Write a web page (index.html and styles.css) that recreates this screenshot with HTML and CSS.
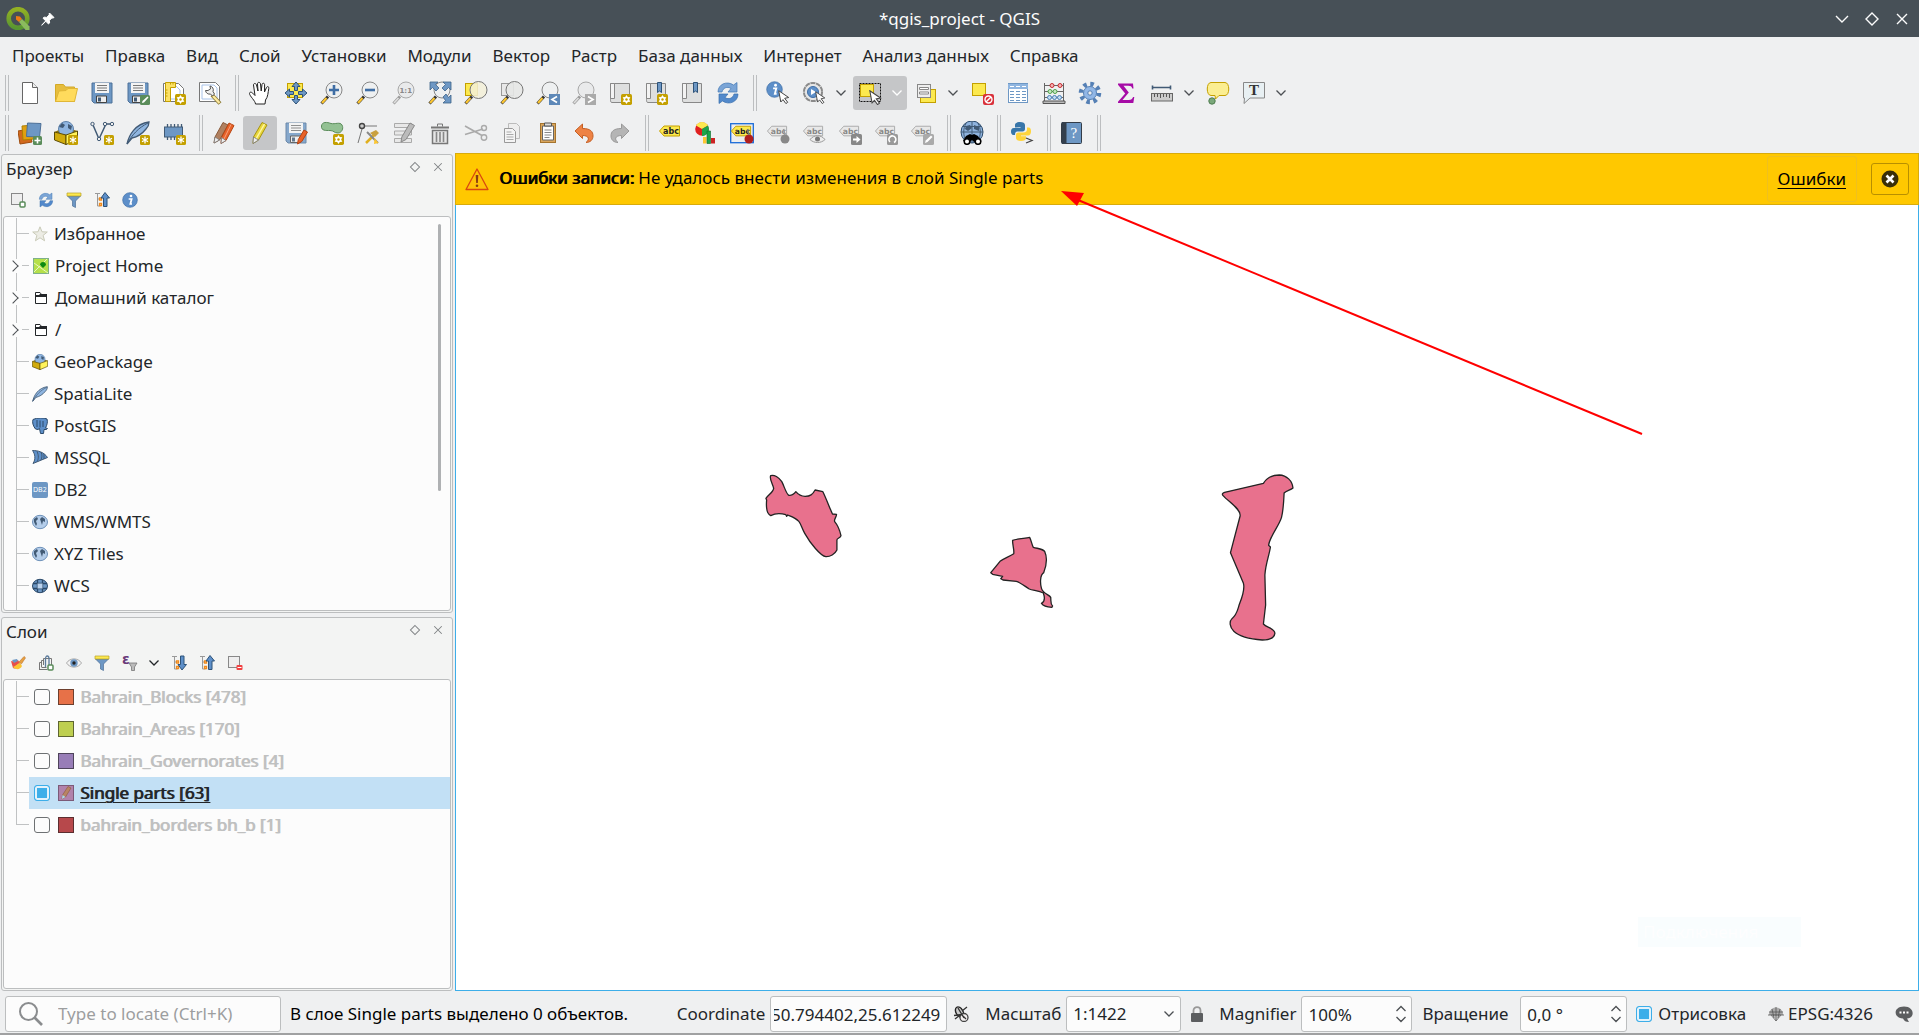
FILE: index.html
```html
<!DOCTYPE html>
<html lang="ru">
<head>
<meta charset="utf-8">
<title>*qgis_project - QGIS</title>
<link rel="stylesheet" href="styles.css">
</head>
<body>
<svg class="sprite" aria-hidden="true">
<defs>
<linearGradient id="qg" x1="0" y1="0" x2="0" y2="1"><stop offset="0" stop-color="#93b023"/><stop offset="1" stop-color="#589632"/></linearGradient>
<symbol id="qgis" viewBox="0 0 24 24"><circle cx="12" cy="11.500" r="9.300" fill="none" stroke="url(#qg)" stroke-width="4.600"/><path d="M10 9l4 .5 2 2.500-3 3-3-2.500z" fill="#ee7913"/><path d="M13 15l3-3 7.500 7.500V23h-4z" fill="#8bbb5e"/></symbol>
<symbol id="pin" viewBox="0 0 14 14"><path d="M8.500 1l4.500 4.500-1.200.6-.8-.3-2.600 2.600.2 2.600-1.100 1-2.700-2.700L.8 13.300 1 12.800l3.700-3.900L2 6.200l1.100-1 2.600.2L8.300 2.800 8 2z" fill="#fff" stroke="#fff"/></symbol>
<symbol id="down" viewBox="0 0 16 16"><path d="M2 5l6 6 6-6" fill="none" stroke="currentColor" stroke-width="1.400"/></symbol>
<symbol id="diamond" viewBox="0 0 16 16"><path d="M8 2l6 6-6 6-6-6z" fill="none" stroke="currentColor" stroke-width="1.400"/></symbol>
<symbol id="x" viewBox="0 0 16 16"><path d="M3 3l10 10M13 3L3 13" fill="none" stroke="currentColor" stroke-width="1.400"/></symbol>
<symbol id="chev" viewBox="0 0 10 10"><path d="M.5 2.500L5 7l4.500-4.500" fill="none" stroke="currentColor" stroke-width="1.300"/></symbol>

<symbol id="star-badge" viewBox="0 0 10 10"><rect width="10" height="10" rx="1.500" fill="#c4a000"/><path d="M5 1.500v7M2 3.200l6 3.600M8 3.200L2 6.800" stroke="#fff" stroke-width="1.300"/></symbol>
<symbol id="sun-badge" viewBox="0 0 10 10"><rect width="10" height="10" rx="1.500" fill="#c4a000"/><path d="M5 1l1.200 1.800 2.300.2L7.400 5l1.100 2-2.300.2L5 9 3.800 7.200 1.500 7l1.100-2-1.100-2 2.300-.2z" fill="#fff"/><circle cx="5" cy="5" r="1.100" fill="#c4a000"/></symbol>
<symbol id="lens" viewBox="0 0 24 24"><path d="M1.500 22.500l6.500-7" stroke="#333" stroke-width="3"/><path d="M2 22l4.500-5" stroke="#fcc631" stroke-width="2.200"/><circle cx="14" cy="9" r="8" fill="#eef0f1" stroke="#888"/></symbol>
<symbol id="lens-off" viewBox="0 0 24 24"><path d="M1.500 22.500l6.500-7" stroke="#999" stroke-width="3"/><path d="M2 22l4.500-5" stroke="#ddd" stroke-width="1.800"/><circle cx="14" cy="9" r="8" fill="#e9eaeb" stroke="#a9a9a9"/></symbol>
<symbol id="tag" viewBox="0 0 24 14"><path d="M6 1h15.500v10H6L1.500 6z" fill="#fce94f" stroke="#c4a000"/><text x="5" y="9" class="abc" fill="#222">abc</text></symbol>
<symbol id="tag-off" viewBox="0 0 24 14"><path d="M6 1h15.500v10H6L1.500 6z" fill="#e8e8e8" stroke="#aaa"/><text x="5" y="9" class="abc" fill="#888">abc</text></symbol>

<symbol id="new" viewBox="0 0 24 24"><path d="M4.500 1.500h10l5 5v16h-15z" fill="#fff" stroke="#666"/><path d="M14.500 1.500v5h5" fill="#eee" stroke="#666"/></symbol>
<symbol id="open" viewBox="0 0 24 24"><path d="M1.500 20.500v-17h8l2 2.500h9v14.500z" fill="#e6bd3d" stroke="#d3a927"/><path d="M1.500 20.500L5 10l7-.5 2-2h9.500l-3 13z" fill="#ffdb5c" stroke="#e0b636"/></symbol>
<symbol id="save" viewBox="0 0 24 24"><path d="M2 2h20v20H4l-2-2z" fill="#6d97c4" stroke="#4d7098"/><path d="M5 2h14v10H5z" fill="#f4f4f4"/><path d="M7 4.500h10M7 7h10M7 9.500h10" stroke="#777"/><path d="M6.500 15h10v6.500h-10z" fill="#eee" stroke="#444"/><path d="M8 16.500h3v4H8z" fill="#415a75"/></symbol>
<symbol id="saveas" viewBox="0 0 24 24"><use href="#save"/><rect x="14" y="14" width="10" height="10" rx="1.500" fill="#5a8c5a"/><path d="M16 22l.5-2 5-4.500 1 1-4.500 5z" fill="#fff"/></symbol>
<symbol id="layout" viewBox="0 0 24 24"><path d="M1.500 2.500h15l5 5v13h-20z" fill="#fff" stroke="#777"/><path d="M4 5h10l4 4v9H4z" fill="#fff" stroke="#a8c2e8"/><path d="M3.500 1.500h10v5h-5v14h-5z" fill="#fce166" stroke="#c4a000"/><path d="M3.500 9h2M3.500 12h2M3.500 15h2M8.500 1.500v2M11 1.500v2" stroke="#c4a000"/><use href="#sun-badge" x="13" y="13" width="11" height="11"/></symbol>
<symbol id="manager" viewBox="0 0 24 24"><path d="M1.500 1.500h16l4 4v15h-20z" fill="#fff" stroke="#777"/><path d="M4 4h12l3 3v11H4z" fill="none" stroke="#a8c2e8"/><path d="M14 14l8 8.500" stroke="#8b7a35" stroke-width="4"/><path d="M15 15l6.500 7" stroke="#fce9a0" stroke-width="2.400"/><path d="M7.500 9.500a4 4 0 0 0 5 3.500l2 2 2-2-1.500-2.500A4 4 0 0 0 12 5l.5 3-2.500 1.500z" fill="#eee" stroke="#555"/></symbol>
<symbol id="hand" viewBox="0 0 24 24"><path d="M7.500 23c0-3-6-8-6-10.500 0-2 2.500-1.500 3.500 0l2 2L5.500 4c0-2 2.500-2 3 0l1.500 6-.5-7c0-2.200 2.700-2.200 3 0l.7 7 .8-6.500c.4-1.800 2.600-1.600 2.600.2L16.500 11l2-4.500c.8-1.600 2.700-.8 2.300.8-.8 4.200-.8 8.700-3.300 11.700l-.5 4z" fill="#fff" stroke="#222"/></symbol>
<symbol id="pan" viewBox="0 0 24 24"><rect x="3.500" y="2.500" width="15" height="14" fill="#fce94f" stroke="#c4a000"/><path d="M12 1l4 4.500h-2.500v4h-3v-4H8zM12 23l4-4.500h-2.500v-4h-3v4H8zM1 12l4.500-4v2.500h4v3h-4V16zM23 12l-4.500-4v2.500h-4v3h4V16z" fill="#6d97c4" stroke="#2d5278"/></symbol>
<symbol id="zin" viewBox="0 0 24 24"><use href="#lens"/><path d="M14 4v10M9 9h10" stroke="#3f6ea5" stroke-width="2.600"/></symbol>
<symbol id="zout" viewBox="0 0 24 24"><use href="#lens"/><path d="M9 9h10" stroke="#3f6ea5" stroke-width="2.600"/></symbol>
<symbol id="z11" viewBox="0 0 24 24"><use href="#lens-off"/><text x="7.500" y="12" class="abc one" fill="#888">1:1</text></symbol>
<symbol id="zfull" viewBox="0 0 24 24"><use href="#lens"/><path d="M2 1h8L7.500 3.500 11 7l-3 3-3.500-3.500L2 9zM23 1v8l-2.500-2.500L17 10l-3-3 3.500-3.500L15 1zM23 22h-8l2.500-2.500L15 16l3-3 2.500 3.500L23 14z" fill="#6d97c4" stroke="#3d6289" stroke-width=".8"/></symbol>
<symbol id="zsel" viewBox="0 0 24 24"><rect x="1.500" y="2.500" width="12" height="12" fill="#fce94f" stroke="#c4a000"/><path d="M1.500 22.500l6.500-7" stroke="#333" stroke-width="3"/><path d="M2 22l4.500-5" stroke="#fcc631" stroke-width="2.200"/><circle cx="14.500" cy="9" r="8.500" fill="#f3f0d8" fill-opacity=".85" stroke="#777"/></symbol>
<symbol id="zlay" viewBox="0 0 24 24"><rect x="1.500" y="2.500" width="12" height="12" fill="#e8e8e8" stroke="#999"/><path d="M1.500 22.500l6.500-7" stroke="#333" stroke-width="3"/><path d="M2 22l4.500-5" stroke="#fcc631" stroke-width="2.200"/><circle cx="14.500" cy="9" r="8.500" fill="#e6e7e6" fill-opacity=".9" stroke="#777"/></symbol>
<symbol id="zprev" viewBox="0 0 24 24"><use href="#lens"/><rect x="13" y="13" width="11" height="11" fill="#5d88b8"/><path d="M21 15.500l-5 3 5 3" fill="none" stroke="#fff" stroke-width="1.700"/></symbol>
<symbol id="znext" viewBox="0 0 24 24"><use href="#lens-off"/><rect x="13" y="13" width="11" height="11" fill="#aaa"/><path d="M16 15.500l5 3-5 3" fill="none" stroke="#fff" stroke-width="1.700"/></symbol>
<symbol id="book" viewBox="0 0 24 24"><path d="M2.500 2.500h19v19H4c-1.500 0-1.500-1.500-1.500-3z" fill="#dedfdf" stroke="#888"/><path d="M2.500 2.500h4v15h-4z" fill="#f3f3f3" stroke="#888"/></symbol>
<symbol id="newview" viewBox="0 0 24 24"><use href="#book"/><use href="#sun-badge" x="13" y="13" width="11" height="11"/></symbol>
<symbol id="newmark" viewBox="0 0 24 24"><use href="#book"/><path d="M13.500 1.500h4v10l-2-1.500-2 1.500z" fill="#6d97c4" stroke="#2d5278"/><use href="#sun-badge" x="13" y="13" width="11" height="11"/></symbol>
<symbol id="marks" viewBox="0 0 24 24"><use href="#book"/><path d="M13.500 1.500h4v10l-2-1.500-2 1.500z" fill="#6d97c4" stroke="#2d5278"/></symbol>
<symbol id="refresh" viewBox="0 0 24 24"><path d="M2 11C2 3 11-.5 17.500 4L21 1.500V11h-9l3-3.500C11 5 7 7 6 11z" fill="#7ba5d6" stroke="#4378b4" stroke-width=".7"/><path d="M22 13c0 8-9 11.500-15.500 7L3 22.500V13h9l-3 3.500c4 2.500 8 .5 9-3.500z" fill="#5289cb" stroke="#3b70ad" stroke-width=".7"/></symbol>
<symbol id="cursor" viewBox="0 0 12 14"><path d="M.7.700l10 6.800-4 .8 3 4-1.800 1.300-2.900-4L2.800 12z" fill="#fff" stroke="#444"/></symbol>
<symbol id="info" viewBox="0 0 24 24"><circle cx="12" cy="12" r="11" fill="#5d8fc9" stroke="#3e6ea6"/><circle cx="13.500" cy="6" r="2" fill="#fff"/><path d="M10 10.500h4.500L12.500 18H15" fill="none" stroke="#fff" stroke-width="2.600"/></symbol>
<symbol id="ident" viewBox="0 0 24 24"><use href="#info" x="0" y="0" width="17" height="17"/><use href="#cursor" x="12" y="9" width="12" height="14"/></symbol>
<symbol id="action" viewBox="0 0 24 24"><circle cx="11" cy="11" r="9" fill="#e6e6e6" stroke="#8a8a8a" stroke-width="2.200" stroke-dasharray="5 .65"/><circle cx="11" cy="11" r="8" fill="#e6e6e6"/><circle cx="11" cy="11" r="5.500" fill="#5d8fc9" stroke="#3e6ea6"/><path d="M9 8l5 3-5 3z" fill="#fff"/><use href="#cursor" x="13" y="10" width="11" height="13"/></symbol>
<symbol id="select" viewBox="0 0 24 24"><rect x="2.500" y="3.500" width="13" height="12" fill="#fce94f" stroke="#c4a000"/><rect x="1.500" y="2.500" width="21" height="18" fill="none" stroke="#111" stroke-dasharray="2 1"/><use href="#cursor" x="11" y="9" width="13" height="15"/></symbol>
<symbol id="selform" viewBox="0 0 24 24"><rect x="6.500" y="8.500" width="15" height="13" fill="#fce94f" stroke="#c4a000"/><rect x="3.500" y="3.500" width="13" height="13" fill="#eee" stroke="#888"/><path d="M5.500 6.500h9v2h-9zM5.500 11h9v2h-9z" fill="#fff" stroke="#888"/></symbol>
<symbol id="desel" viewBox="0 0 24 24"><rect x="2.500" y="2.500" width="13" height="12" fill="#fce94f" stroke="#c4a000"/><rect x="13" y="13" width="11" height="11" rx="2" fill="#d9303a"/><circle cx="18.500" cy="18.500" r="3.500" fill="none" stroke="#fff" stroke-width="1.400"/><path d="M16 21l5-5" stroke="#fff" stroke-width="1.400"/></symbol>
<symbol id="table" viewBox="0 0 24 24"><rect x="2.500" y="2.500" width="19" height="19" fill="#fff" stroke="#6d97c4"/><path d="M2 3h20v5H2z" fill="#8fb5e0"/><path d="M4 5.500h4M10 5.500h4M16 5.500h4" stroke="#fff"/><path d="M4 10.500h4M4 13.500h4M4 16.500h4M4 19.500h4M10 10.500h4M10 13.500h4M10 16.500h4M10 19.500h4M16 10.500h4M16 13.500h4M16 16.500h4M16 19.500h4" stroke="#6d97c4"/></symbol>
<symbol id="abacus" viewBox="0 0 24 24"><path d="M2.500 2v19M21.500 2v19M2 4.500h20M2 10.500h20M2 16.500h20" stroke="#666" fill="none"/><path d="M1 20h22v2.500H1z" fill="#bbb" stroke="#555"/><g fill="#f4b6b6" stroke="#c8282d"><circle cx="10" cy="4.500" r="2"/><circle cx="18" cy="4.500" r="2"/></g><g fill="#c6e6c3" stroke="#4fa34a"><circle cx="8" cy="10.500" r="2"/><circle cx="13" cy="10.500" r="2"/></g><g fill="#c3dcf4" stroke="#4a80b5"><circle cx="7.500" cy="16.500" r="2"/><circle cx="12.500" cy="16.500" r="2"/><circle cx="17.500" cy="16.500" r="2"/></g></symbol>
<symbol id="gear" viewBox="0 0 24 24"><circle cx="12" cy="12" r="9" fill="none" stroke="#5580b5" stroke-width="4.500" stroke-dasharray="3.500 3.570"/><circle cx="12" cy="12" r="6.500" fill="#92b7e6" stroke="#5580b5"/><circle cx="12" cy="12" r="2.200" fill="#eee" stroke="#5580b5"/></symbol>
<symbol id="sigma" viewBox="0 0 24 24"><path d="M4 2.500h15l.5 5h-1.200c-.6-2-1.500-2.700-4-2.700H9.500l5.300 6.800L8.500 19h6.300c2.500 0 3.500-1 4.300-3h1.200l-1 6H4v-1.200l7.200-8.300L4 3.700z" fill="#a60ba6"/></symbol>
<symbol id="ruler" viewBox="0 0 24 24"><path d="M2 6.500h19M2.500 4.500v4M20.500 4.500v4" stroke="#415a75" stroke-width="1.600"/><rect x="1.500" y="12.500" width="21" height="7.500" fill="#ccc" stroke="#666"/><path d="M4.500 13v3M7.500 13v3M10.500 13v4M13.500 13v3M16.500 13v3M19.500 13v4" stroke="#555"/></symbol>
<symbol id="tip" viewBox="0 0 24 24"><circle cx="6" cy="20" r="3.200" fill="#7aa87a" stroke="#4f7d4f"/><path d="M5 1.500h14c5 0 5 13 0 13h-6L9.500 18l-.5-3.500H5c-5 0-5-13 0-13z" fill="#fbee92" stroke="#c4a000"/></symbol>
<symbol id="textann" viewBox="0 0 24 24"><path d="M1.500 1.500h21V17H8l-6 5.500.5-5.500h-1z" fill="#e8f0f3" stroke="#888"/><text x="7" y="14" class="tt" fill="#333">T</text></symbol>

<symbol id="dsm" viewBox="0 0 24 24"><path d="M0 10l11-2 3 13-12 2z" fill="#d2691e" stroke="#a04d10"/><path d="M4 5l12-1v14l-11 1z" fill="#e0a010" stroke="#b08000"/><path d="M9.500 2l13.500.5-1.500 13.500-13-.5z" fill="#6d97c4" stroke="#4d7098"/><rect x="15" y="15" width="9" height="9" rx="1.500" fill="#5a8c5a"/><path d="M19.500 16.500v6M16.500 19.500h6" stroke="#fff" stroke-width="1.600"/></symbol>
<symbol id="gpkg" viewBox="0 0 24 24"><path d="M.5 11L7 8h10l6.500 2L12 14z" fill="#8a7206"/><circle cx="12" cy="8" r="7.500" fill="#8fb5e0" stroke="#5d80a8"/><path d="M8 2l3 2-2 3-4-1zM14 3l4 2-1 4-3-2z" fill="#415a75"/><path d="M.5 11L12 14v9.500L.5 19z" fill="#d1ab0c" stroke="#5c4c05"/><path d="M12 14l11.500-4v8.500L12 23.500z" fill="#fff35a" stroke="#5c4c05"/></symbol>
<symbol id="newgpkg" viewBox="0 0 24 24"><use href="#gpkg"/><use href="#star-badge" x="14" y="14" width="10" height="10"/></symbol>
<symbol id="newshp" viewBox="0 0 24 24"><path d="M3 4l6 14 7-15h6" fill="none" stroke="#415a75" stroke-width="1.500"/><g fill="#eee" stroke="#415a75"><circle cx="2.500" cy="3" r="1.700"/><circle cx="9" cy="18" r="1.700"/><circle cx="15" cy="3" r="1.700"/><circle cx="22" cy="3" r="1.700"/></g><use href="#star-badge" x="14" y="14" width="10" height="10"/></symbol>
<symbol id="feather" viewBox="0 0 24 24"><path d="M1 23C3 14 9 3 23 1c0 3-1 5-3 7-4 5-9 8-14 9z" fill="#8fb5e0" stroke="#415a75" stroke-width="1.300"/><path d="M1 23C6 14 12 7 22 2" fill="none" stroke="#415a75"/></symbol>
<symbol id="newlite" viewBox="0 0 24 24"><use href="#feather"/><use href="#star-badge" x="14" y="14" width="10" height="10"/></symbol>
<symbol id="chip" viewBox="0 0 24 24"><path d="M5.500 3v16M9 3v16M12.500 3v16M16 3v16M19.500 3v16" stroke="#415a75" stroke-width="1.300"/><rect x="2.500" y="6" width="18" height="10" fill="#6d97c4" stroke="#415a75"/><use href="#star-badge" x="14" y="14" width="10" height="10"/></symbol>
<symbol id="pencils" viewBox="0 0 24 24"><path d="M2 22l1-6L11 1.500l5 2.500-8.500 15z" fill="#b08060" stroke="#8a5a3a"/><path d="M9 22.500l.5-6L17 2l5 2.500-8 15z" fill="#e8622a" stroke="#b64410"/><path d="M12 18L19 3.500" stroke="#f7a07a"/><path d="M9 22.500l.5-6 4.500 3zM2 22l1-6 4.500 3z" fill="#eee" stroke="#777" stroke-width=".8"/></symbol>
<symbol id="pencil" viewBox="0 0 24 24"><path d="M5 22.500l.5-6.500L14 1.500l5 2.500-8.500 15z" fill="#e8d63c" stroke="#a89410"/><path d="M8 18L16.500 3" stroke="#fff7a0" stroke-width="1.500"/><path d="M5 22.500l.5-6.500 5 3z" fill="#eee" stroke="#777" stroke-width=".8"/></symbol>
<symbol id="saveedit" viewBox="0 0 24 24"><g opacity=".8"><use href="#save"/></g><path d="M13.500 23l.8-4.500L20 9l3.500 2-5.700 9.500z" fill="#e8622a" stroke="#b64410"/></symbol>
<symbol id="addpoly" viewBox="0 0 24 24"><path d="M1.500 5C2 .5 7 1 11 2.500c4 1 9-2 11 1.500s-.5 8-4 8c-4 0-4-2.500-8-2.500s-9 .5-8.500-4.500z" fill="#93c193" stroke="#5a8c5a"/><use href="#sun-badge" x="13" y="13" width="11" height="11"/></symbol>
<symbol id="vertex" viewBox="0 0 24 24"><path d="M6 8L2 22M8 5h13" stroke="#777"/><circle cx="6" cy="5" r="2.500" fill="#ccc" stroke="#444" stroke-width="1.400"/><path d="M10 22L20 12" stroke="#e0b020" stroke-width="2.500"/><path d="M11 11l11 11" stroke="#888" stroke-width="2"/><path d="M18 23l4.500-1-4-5z" fill="#fcc631"/><path d="M14 12l6-3 3 3-4 4z" fill="#c9a040"/></symbol>
<symbol id="multi" viewBox="0 0 24 24"><path d="M2.500 2.500h17v4h-17zM2.500 10h17v4h-17zM2.500 17.500h17v4h-17z" fill="#e8e8e8" stroke="#aaa"/><path d="M9 21l.8-5L18 2l4.500 2.500-8.500 14z" fill="#bbb" stroke="#888"/></symbol>
<symbol id="trash" viewBox="0 0 24 24"><path d="M4.500 9.500h15v13h-15z" fill="#e6e6e6" stroke="#777" stroke-width="1.500"/><path d="M8.500 11v10M12 11v10M15.500 11v10" stroke="#888" stroke-width="1.600"/><path d="M3 6.500h18" stroke="#777" stroke-width="2"/><path d="M9.500 5.500V3h5v2.500" fill="none" stroke="#777"/></symbol>
<symbol id="cut" viewBox="0 0 24 24"><path d="M1 5l17 9.500M1 13.500l18-5.500" stroke="#aaa" stroke-width="1.600"/><circle cx="20" cy="7" r="2.500" fill="none" stroke="#aaa" stroke-width="1.400"/><circle cx="20" cy="16.500" r="2.700" fill="none" stroke="#aaa" stroke-width="1.400"/></symbol>
<symbol id="copy" viewBox="0 0 24 24"><path d="M8.500 2.500h8l3 3v12h-11z" fill="#eee" stroke="#bbb"/><path d="M4.500 7.500h8l3 3v11h-11z" fill="#f4f4f4" stroke="#999"/><path d="M6.500 11h5M6.500 13.500h7M6.500 16h7M6.500 18.500h7" stroke="#aaa"/></symbol>
<symbol id="paste" viewBox="0 0 24 24"><rect x="4.500" y="2.500" width="15" height="19" fill="#d9a55c" stroke="#a5742e"/><path d="M6.500 5h11v14h-11z" fill="#fff" stroke="#666"/><path d="M8.500 2h7v3h-7z" fill="#ddd" stroke="#555"/><path d="M8.500 9h7M8.500 11.500h7M8.500 14h7M8.500 16.500h5" stroke="#888"/></symbol>
<symbol id="undo" viewBox="0 0 24 24"><path d="M3 10l7.500-7v4.500c8 0 10.500 3 10.500 7.500 0 4-3 6.500-7 6.500 4-3 3-7-3.500-7v3z" fill="#ee8244" stroke="#c45f24"/></symbol>
<symbol id="redo" viewBox="0 0 24 24"><path d="M21 10l-7.500-7v4.500C5.500 7.500 3 10.500 3 15c0 4 3 6.500 7 6.500-4-3-3-7 3.500-7v3z" fill="#b5b5b5" stroke="#999"/></symbol>
<symbol id="label" viewBox="0 0 24 24"><use href="#tag" x="0" y="4" width="24" height="14"/></symbol>
<symbol id="diagram" viewBox="0 0 24 24"><circle cx="8" cy="8" r="6.800" fill="#e02020"/><path d="M8 8L2 4.500A7 7 0 0 1 14 4.500z" fill="#fce94f"/><path d="M8 8l6-3.500A7 7 0 0 1 8 15z" fill="#1ca54a"/><path d="M9 16h3.500v6.500H9z" fill="#fcc631"/><path d="M13 10h3.500v12.500H13z" fill="#1ca54a" stroke="#0c6a2a" stroke-width=".6"/><path d="M17 17h4v5.500h-4z" fill="#c22"/></symbol>
<symbol id="labpin" viewBox="0 0 24 24"><rect x=".7" y="2.700" width="22.600" height="19" fill="#eee" stroke="#1a6bd8" stroke-width="1.300"/><use href="#tag" x="0" y="4" width="23" height="14"/><circle cx="19" cy="18" r="4.500" fill="#b01e1e"/><path d="M17.500 8l1.500 6" stroke="#777" stroke-width="1.500"/></symbol>
<symbol id="l1" viewBox="0 0 24 24"><use href="#tag-off" x="0" y="4" width="23" height="14"/><circle cx="19" cy="18" r="4.500" fill="#888"/><path d="M17.500 8l1.500 6" stroke="#999" stroke-width="1.500"/></symbol>
<symbol id="l2" viewBox="0 0 24 24"><use href="#tag-off" x="0" y="4" width="23" height="14"/><path d="M8 18.500c4-5 11-5 15 0-4 4-11 4-15 0z" fill="#eee" stroke="#999"/><circle cx="15.500" cy="18" r="2.500" fill="#777"/></symbol>
<symbol id="l3" viewBox="0 0 24 24"><use href="#tag-off" x="0" y="4" width="23" height="14"/><rect x="13" y="13" width="11" height="11" rx="1.500" fill="#888"/><path d="M15 17.500h3.500V15l4 3.500-4 3.500v-2.500H15z" fill="#fff"/></symbol>
<symbol id="l4" viewBox="0 0 24 24"><use href="#tag-off" x="0" y="4" width="23" height="14"/><rect x="13" y="13" width="11" height="11" rx="1.500" fill="#999"/><path d="M16 21a3.500 3.500 0 1 1 4 .5" fill="none" stroke="#fff" stroke-width="1.600"/></symbol>
<symbol id="l5" viewBox="0 0 24 24"><use href="#tag-off" x="0" y="4" width="23" height="14"/><rect x="13" y="13" width="11" height="11" rx="1.500" fill="#aaa"/><path d="M15 22l.7-2.500 5.300-5 1.500 1.500-5 5z" fill="#fff"/></symbol>
<symbol id="csw" viewBox="0 0 24 24"><circle cx="12" cy="11" r="11" fill="#8fb3de" stroke="#2c4a6a"/><path d="M1 11h22M12 0v22M3 5.500h18M6 2c-3 6-3 12 0 18M18 2c3 6 3 12 0 18" fill="none" stroke="#415a75"/><path d="M6 5l4-1 2 3-4 3-3-2zM14 4l5 2v4l-5-2z" fill="#415a75"/><path d="M6 15l4-2 2 1 2-1 4 2 3 5-7 1-2-2-2 2-7-1z" fill="#000"/><circle cx="7" cy="20.500" r="2.800" fill="#fff" stroke="#000" stroke-width="1.600"/><circle cx="18" cy="20.500" r="2.800" fill="#fff" stroke="#000" stroke-width="1.600"/></symbol>
<symbol id="python" viewBox="0 0 24 24"><path d="M5 6.500V4c0-2 2-3 5-3s5 1 5 3v4c0 1.500-1 2.500-2.500 2.500h-5C5.500 10.500 5 12 5 14H3.500C1.500 14 1 12 1 10.500s.5-3.500 3-3.500h6.500v-.7z" fill="#3876aa"/><path d="M17 6.500h1.500c2 0 2.500 2 2.500 4s-1 4-3 4H11v.7h5V17c0 2-2 3-5 3s-5-1-5-3v-3c0-1.500 1-2.500 2.500-2.500h5c2 0 3.500-1 3.500-3z" fill="#ffd43b"/><path d="M16 17l6 2.500-6 2.500" fill="none" stroke="#444" stroke-width="1.300"/></symbol>
<symbol id="help" viewBox="0 0 24 24"><rect x="1.500" y="1.500" width="20" height="21" rx="1" fill="#6d97c4" stroke="#333c47"/><path d="M2 1h4.500v22H2z" fill="#333f4d"/><text x="10.500" y="17" class="qq" fill="#fff">?</text></symbol>

<symbol id="additem" viewBox="0 0 16 16"><rect x="1.500" y="1.500" width="11" height="11" fill="#eee" stroke="#888"/><rect x="10" y="10" width="5" height="5" rx="1" fill="#fff" stroke="#5a8c5a" stroke-width="1.500"/></symbol>
<symbol id="filter" viewBox="0 0 16 16"><path d="M1.500 4h13L9.500 9v6.500l-3-1.500V9z" fill="#6d97c4" stroke="#4d7098" stroke-width=".7"/><path d="M1 1h14v3H1z" fill="#fce94f" stroke="#b9a22a" stroke-width=".7"/></symbol>
<symbol id="collapse" viewBox="0 0 16 16"><path d="M1 1.500h5M3.500 2v12h3M3.500 7h2" fill="none" stroke="#999"/><path d="M5.500 6h2v2h-2zM5.500 11.500h2v2h-2z" fill="#fff" stroke="#f08a1c" stroke-width="1.300"/><path d="M11 .5L15.500 6H13v8.500H9.500V6H7z" fill="#5d8fc9" stroke="#2d5278"/></symbol>
<symbol id="expand" viewBox="0 0 16 16"><path d="M1 1.500h5M3.500 2v12h3M3.500 7h2" fill="none" stroke="#999"/><path d="M5.500 6h2v2h-2zM5.500 11.500h2v2h-2z" fill="#fff" stroke="#f08a1c" stroke-width="1.300"/><path d="M11 15L15.500 9.500H13V1H9.500v8.500H7z" fill="#5d8fc9" stroke="#2d5278"/></symbol>
<symbol id="brush" viewBox="0 0 16 16"><path d="M1 6c3 1 5-1 7-1l3 5c-2 4-6 4-8 3z" fill="#e85048"/><path d="M3 12c3-1 5-4 7-4l2 3c-2 4-6 4-9 1z" fill="#fcc631"/><path d="M2 5l5-1 1 2-4 2z" fill="#6d97c4"/><path d="M9 7l5-5.500 1.500 1.300-4 6z" fill="#e8a040" stroke="#b9722a" stroke-width=".6"/></symbol>
<symbol id="addgroup" viewBox="0 0 16 16"><path d="M5.500 10V3.500h8V10M3.500 12V5.500M3.500 5.500h2M1.500 15V7.500h2M1.500 14.500h8M3.500 12.500h5" fill="none" stroke="#777"/><path d="M7.500 12V4c0-4 3.500-4 3.500 0v6" fill="none" stroke="#5d7c9c" stroke-width="1.300"/><rect x="10" y="10" width="5" height="5" rx="1" fill="#fff" stroke="#5a8c5a" stroke-width="1.500"/></symbol>
<symbol id="eye" viewBox="0 0 16 16"><path d="M.5 8C4 2.500 12 2.500 15.500 8 12 13.500 4 13.500.5 8z" fill="#f2f2f2" stroke="#aaa"/><circle cx="8" cy="8" r="3.700" fill="#6d97c4"/><circle cx="8" cy="8" r="1.700" fill="#222"/></symbol>
<symbol id="eps" viewBox="0 0 16 16"><text x="0" y="9" class="ee" fill="#6a3a7a">ε</text><path d="M7 8h8l-2.500 4v3.500H9.500V12z" fill="#bbb" stroke="#777" stroke-width=".8"/></symbol>
<symbol id="remove" viewBox="0 0 16 16"><rect x="1.500" y="1.500" width="11" height="11" fill="#eee" stroke="#888"/><rect x="9.500" y="10" width="6" height="5" rx="1" fill="#f04040"/><path d="M10.500 12.500h4" stroke="#fff"/></symbol>

<symbol id="fav" viewBox="0 0 16 16"><path d="M8 .8l2 5 5.300.2-4.200 3.400 1.500 5.400L8 11.800l-4.600 3 1.500-5.400L.7 6 6 5.800z" fill="#ecece4" stroke="#c9cab8"/></symbol>
<symbol id="home" viewBox="0 0 16 16"><rect x=".5" y=".5" width="15" height="15" fill="#b5e04a" stroke="#7fb08a"/><path d="M1 5l14 10M1 14L14 1" stroke="#e7f7c0"/><path d="M10 10L7 7c0-4 6-4 6 0z" fill="#0c8a10"/></symbol>
<symbol id="folder" viewBox="0 0 16 16"><path d="M2.500 13.500v-11H7l1.500 2h5v9z" fill="#fff" stroke="#232629"/><path d="M7 4h7v3H3V5h3z" fill="#232629"/></symbol>
<symbol id="pg" viewBox="0 0 16 16"><path d="M1 1.500C5-.5 12-.5 15 1c1 3 0 6-1.500 9l2 .5-1 1h-2.500l-.5 4H8.500l-1-5-1.500 1-2.500-.5C1 8 0 4 1 1.500z" fill="#5d8fc9" stroke="#2c4a6a"/><path d="M5 2v7M8 2.500v7M11 3v6" stroke="#2c4a6a"/></symbol>
<symbol id="ms" viewBox="0 0 16 16"><path d="M.5.500C6 .5 12 2 15.500 7.500L1 13.500C4 9 3 4 .5.500z" fill="#5d8fc9" stroke="#415a75"/><path d="M5 1.500c2 4 1.500 8 0 10M9 2c1.500 3 1 5.500 0 8M12 4v5" fill="none" stroke="#415a75"/></symbol>
<symbol id="db2" viewBox="0 0 16 16"><rect width="16" height="16" rx="2" fill="#6d97c4"/><text x="1" y="10" class="db" fill="#fff">DB2</text></symbol>
<symbol id="globe" viewBox="0 0 16 16"><ellipse cx="8" cy="8" rx="7.500" ry="6.700" fill="#b4cdea" stroke="#6d90b8"/><path d="M2 5l3-2 1 2-2 2 1 3-1 2-2-4zM8 5l2-2 3 2v3l-2-1-1 4-1-3z" fill="#415a75"/></symbol>
<symbol id="wcs" viewBox="0 0 16 16"><ellipse cx="8" cy="8" rx="7.500" ry="6.700" fill="#6d97c4" stroke="#2c4a6a"/><path d="M1 5.500h14M1 10.500h14M5.500 2v12M10.500 2v12" stroke="#2c4a6a" stroke-width="1.300"/><path d="M5.500 5.500h5v5h-5z" fill="#bcd3ee"/></symbol>
<symbol id="editsw" viewBox="0 0 16 16"><rect x=".5" y=".5" width="15" height="15" fill="#b182ab" stroke="#7c5a78"/><path d="M4 14l.5-4L10 1.500l3 1.500-5.500 9z" fill="#b98464" stroke="#8a5a3a" stroke-width=".6"/><path d="M4 14l.5-4 3 2z" fill="#a7d8f0"/></symbol>

<symbol id="warn" viewBox="0 0 24 24"><path d="M12 2L23 22.500H1z" fill="#ffc107" stroke="#d9480f" stroke-width="1.300" stroke-linejoin="round"/><path d="M10.700 8h2.600l-.5 8h-1.600z" fill="#8a3b12"/><circle cx="12" cy="18.800" r="1.300" fill="#8a3b12"/></symbol>
<symbol id="close" viewBox="0 0 18 18"><circle cx="9" cy="9" r="8.500" fill="#3a2f08"/><path d="M5.500 5.500l7 7M12.500 5.500l-7 7" stroke="#fff" stroke-width="2.600"/></symbol>
<symbol id="search" viewBox="0 0 24 24"><circle cx="9.500" cy="9.500" r="8.500" fill="none" stroke="#8a8c8e" stroke-width="2"/><path d="M15.500 15.500l7.500 7.500" stroke="#8a8c8e" stroke-width="2.600"/></symbol>
<symbol id="mouse" viewBox="0 0 16 16"><ellipse cx="6.500" cy="6" rx="3.500" ry="5.500" transform="rotate(-30 6.500 6)" fill="#ccc" stroke="#222" stroke-width="1.400"/><circle cx="11" cy="11.500" r="4" fill="#f4f0f0" stroke="#444" stroke-width="1.300"/><path d="M1 9.500l8-1M2 13l5-4M9 5l5-4M5 2l6 10M10 10l3 3" stroke="#333" stroke-width="1.300"/></symbol>
<symbol id="lock" viewBox="0 0 14 16"><path d="M3.500 8V4.500c0-4.500 7-4.500 7 0V8" fill="none" stroke="#999" stroke-width="1.800"/><rect x="1" y="7" width="12" height="9" rx="1" fill="#5c5e60"/></symbol>
<symbol id="crs" viewBox="0 0 16 16"><path d="M1 9C1-1 15-1 15 9z" fill="#aaa"/><path d="M3 9l5 6 5-6z" fill="#ccc" stroke="#888"/><path d="M1 6h14M8 1v14M4 3l2 9M12 3l-2 9M0 9h16" stroke="#555" fill="none" stroke-width=".8"/></symbol>
<symbol id="bubble" viewBox="0 0 18 16"><path d="M9 .5c11 0 11 12 3 12l2 3.500c-3 0-5-1-6-3.500C-2 12-2 .5 9 .5z" fill="#5c5e60"/><path d="M4.500 6.500h2M8 6.500h2M11.500 6.500h2" stroke="#fff" stroke-width="2"/></symbol>
</defs>
</svg>

<header class="titlebar">
  <div class="tb-side"><svg class="i24"><use href="#qgis"/></svg><svg class="i14"><use href="#pin"/></svg></div>
  <h1>*qgis_project - QGIS</h1>
  <div class="tb-side end"><button aria-label="Свернуть"><svg class="i16"><use href="#down"/></svg></button><button aria-label="Развернуть"><svg class="i16"><use href="#diamond"/></svg></button><button aria-label="Закрыть"><svg class="i16"><use href="#x"/></svg></button></div>
</header>

<nav class="menubar">
  <button>Проекты</button><button>Правка</button><button>Вид</button><button>Слой</button><button>Установки</button><button>Модули</button><button>Вектор</button><button>Растр</button><button>База данных</button><button>Интернет</button><button>Анализ данных</button><button>Справка</button>
</nav>

<div class="toolbar">
  <i class="handle"></i>
  <button class="tool"><svg><use href="#new"/></svg></button>
  <button class="tool"><svg><use href="#open"/></svg></button>
  <button class="tool"><svg><use href="#save"/></svg></button>
  <button class="tool"><svg><use href="#saveas"/></svg></button>
  <button class="tool"><svg><use href="#layout"/></svg></button>
  <button class="tool"><svg><use href="#manager"/></svg></button>
  <i class="handle"></i>
  <button class="tool"><svg><use href="#hand"/></svg></button>
  <button class="tool"><svg><use href="#pan"/></svg></button>
  <button class="tool"><svg><use href="#zin"/></svg></button>
  <button class="tool"><svg><use href="#zout"/></svg></button>
  <button class="tool"><svg><use href="#z11"/></svg></button>
  <button class="tool"><svg><use href="#zfull"/></svg></button>
  <button class="tool"><svg><use href="#zsel"/></svg></button>
  <button class="tool"><svg><use href="#zlay"/></svg></button>
  <button class="tool"><svg><use href="#zprev"/></svg></button>
  <button class="tool"><svg><use href="#znext"/></svg></button>
  <button class="tool"><svg><use href="#newview"/></svg></button>
  <button class="tool"><svg><use href="#newmark"/></svg></button>
  <button class="tool"><svg><use href="#marks"/></svg></button>
  <button class="tool"><svg><use href="#refresh"/></svg></button>
  <i class="handle"></i>
  <button class="tool"><svg><use href="#ident"/></svg></button>
  <button class="tool menu"><svg><use href="#action"/></svg><svg class="arrow"><use href="#chev"/></svg></button>
  <button class="tool menu active"><svg><use href="#select"/></svg><svg class="arrow"><use href="#chev"/></svg></button>
  <button class="tool menu"><svg><use href="#selform"/></svg><svg class="arrow"><use href="#chev"/></svg></button>
  <button class="tool"><svg><use href="#desel"/></svg></button>
  <button class="tool"><svg><use href="#table"/></svg></button>
  <button class="tool"><svg><use href="#abacus"/></svg></button>
  <button class="tool"><svg><use href="#gear"/></svg></button>
  <button class="tool"><svg><use href="#sigma"/></svg></button>
  <button class="tool menu"><svg><use href="#ruler"/></svg><svg class="arrow"><use href="#chev"/></svg></button>
  <button class="tool"><svg><use href="#tip"/></svg></button>
  <button class="tool menu"><svg><use href="#textann"/></svg><svg class="arrow"><use href="#chev"/></svg></button>
</div>
<div class="toolbar">
  <i class="handle"></i>
  <button class="tool"><svg><use href="#dsm"/></svg></button>
  <button class="tool"><svg><use href="#newgpkg"/></svg></button>
  <button class="tool"><svg><use href="#newshp"/></svg></button>
  <button class="tool"><svg><use href="#newlite"/></svg></button>
  <button class="tool"><svg><use href="#chip"/></svg></button>
  <i class="handle"></i>
  <button class="tool"><svg><use href="#pencils"/></svg></button>
  <button class="tool active"><svg><use href="#pencil"/></svg></button>
  <button class="tool"><svg><use href="#saveedit"/></svg></button>
  <button class="tool"><svg><use href="#addpoly"/></svg></button>
  <button class="tool"><svg><use href="#vertex"/></svg></button>
  <button class="tool"><svg><use href="#multi"/></svg></button>
  <button class="tool"><svg><use href="#trash"/></svg></button>
  <button class="tool"><svg><use href="#cut"/></svg></button>
  <button class="tool"><svg><use href="#copy"/></svg></button>
  <button class="tool"><svg><use href="#paste"/></svg></button>
  <button class="tool"><svg><use href="#undo"/></svg></button>
  <button class="tool"><svg><use href="#redo"/></svg></button>
  <i class="handle"></i>
  <button class="tool"><svg><use href="#label"/></svg></button>
  <button class="tool"><svg><use href="#diagram"/></svg></button>
  <button class="tool"><svg><use href="#labpin"/></svg></button>
  <button class="tool"><svg><use href="#l1"/></svg></button>
  <button class="tool"><svg><use href="#l2"/></svg></button>
  <button class="tool"><svg><use href="#l3"/></svg></button>
  <button class="tool"><svg><use href="#l4"/></svg></button>
  <button class="tool"><svg><use href="#l5"/></svg></button>
  <i class="handle"></i>
  <button class="tool"><svg><use href="#csw"/></svg></button>
  <i class="handle"></i>
  <button class="tool"><svg><use href="#python"/></svg></button>
  <i class="handle"></i>
  <button class="tool"><svg><use href="#help"/></svg></button>
  <i class="handle"></i>
</div>

<main class="work">
  <aside class="dock">
    <section class="panel browser">
      <div class="phead"><h2>Браузер</h2><button aria-label="Открепить"><svg><use href="#diamond"/></svg></button><button aria-label="Закрыть"><svg><use href="#x"/></svg></button></div>
      <div class="ptools">
        <button><svg><use href="#additem"/></svg></button><button><svg><use href="#refresh"/></svg></button><button><svg><use href="#filter"/></svg></button><button><svg><use href="#collapse"/></svg></button><button><svg><use href="#info"/></svg></button>
      </div>
      <div class="tree">
        <ul>
          <li><svg><use href="#fav"/></svg>Избранное</li>
          <li class="more"><svg><use href="#home"/></svg>Project Home</li>
          <li class="more"><svg><use href="#folder"/></svg>Домашний каталог</li>
          <li class="more"><svg><use href="#folder"/></svg>/</li>
          <li><svg><use href="#gpkg"/></svg>GeoPackage</li>
          <li><svg><use href="#feather"/></svg>SpatiaLite</li>
          <li><svg><use href="#pg"/></svg>PostGIS</li>
          <li><svg><use href="#ms"/></svg>MSSQL</li>
          <li><svg><use href="#db2"/></svg>DB2</li>
          <li><svg><use href="#globe"/></svg>WMS/WMTS</li>
          <li><svg><use href="#globe"/></svg>XYZ Tiles</li>
          <li><svg><use href="#wcs"/></svg>WCS</li>
          <li><svg><use href="#globe"/></svg></li>
        </ul>
        <i class="scroll"></i>
      </div>
    </section>
    <section class="panel layers">
      <div class="phead"><h2>Слои</h2><button aria-label="Открепить"><svg><use href="#diamond"/></svg></button><button aria-label="Закрыть"><svg><use href="#x"/></svg></button></div>
      <div class="ptools">
        <button><svg><use href="#brush"/></svg></button><button><svg><use href="#addgroup"/></svg></button><button><svg><use href="#eye"/></svg></button><button><svg><use href="#filter"/></svg></button><button class="wide"><svg><use href="#eps"/></svg><svg class="arrow"><use href="#chev"/></svg></button><button><svg><use href="#expand"/></svg></button><button><svg><use href="#collapse"/></svg></button><button><svg><use href="#remove"/></svg></button>
      </div>
      <div class="tree">
        <ul>
          <li><label><input type="checkbox"><i class="swatch orange"></i><span>Bahrain_Blocks [478]</span></label></li>
          <li><label><input type="checkbox"><i class="swatch lime"></i><span>Bahrain_Areas [170]</span></label></li>
          <li><label><input type="checkbox"><i class="swatch violet"></i><span>Bahrain_Governorates [4]</span></label></li>
          <li class="current"><label><input type="checkbox" checked><svg><use href="#editsw"/></svg><span>Single parts [63]</span></label></li>
          <li class="last"><label><input type="checkbox"><i class="swatch red"></i><span>bahrain_borders bh_b [1]</span></label></li>
        </ul>
      </div>
    </section>
  </aside>

  <section class="map">
    <div class="message">
      <svg class="i24"><use href="#warn"/></svg>
      <p><b>Ошибки записи:</b> Не удалось внести изменения в слой Single parts</p>
      <div class="details"><a href="#">Ошибки</a></div>
      <button aria-label="Закрыть"><svg><use href="#close"/></svg></button>
    </div>
    <div class="ghost"><b>Подключения</b><span>Настройка</span><span>Информация</span><span class="exit">Выход</span></div>
    <svg class="features" width="1463" height="837">
      <svg x="284" y="307" width="580" height="200" viewBox="0 0 1568 600" preserveAspectRatio="none">
        <g fill="#e8718d" stroke="#232323" stroke-width="1.300" stroke-linejoin="round">
          <path vector-effect="non-scaling-stroke" d="M83 47C92 43 105 52 113 65C120 80 125 102 132 106C142 107 147 101 151 95C157 103 163 109 176 109C190 109 196 104 203 90L224 95C233 115 242 143 250 162L261 163C261 172 253 178 256 185C262 193 270 212 273 227C272 234 262 234 262 240L262 270C257 282 243 291 232 290C218 288 190 250 175 220C167 204 165 192 159 184C150 173 138 169 129 165L126 169L124 164C112 160 94 160 83 167C73 162 70 145 72 120L70 115C77 104 90 96 91 85C90 75 78 55 83 47Z"/>
          <path vector-effect="non-scaling-stroke" d="M737 241C748 236 770 235 783 232C788 242 789 255 793 262C805 266 819 266 824 275C830 290 829 315 821 338C811 345 811 370 815 385C819 401 836 404 840 412C841 425 839 432 845 438L843 442C830 441 820 438 815 430C823 426 825 415 820 399C808 393 792 391 782 387C768 377 757 367 747 364L711 360L705 356L710 349L683 343L678 338L703 304C715 294 728 290 740 281C742 270 736 253 737 241Z"/>
          <path vector-effect="non-scaling-stroke" d="M1310 97L1415 70C1423 55 1438 45 1458 45C1478 46 1493 62 1495 84C1488 91 1477 92 1471 99C1470 125 1469 150 1464 172C1457 198 1432 230 1429 256L1434 261C1431 285 1421 310 1419 345L1421 435L1415 492C1423 503 1446 504 1446 520C1444 535 1429 540 1412 540C1385 538 1350 530 1335 514C1324 502 1322 485 1330 476C1345 463 1345 448 1351 430C1359 407 1365 386 1361 370L1326 278L1352 168C1355 147 1320 125 1306 107C1302 102 1305 99 1310 97Z"/>
        </g>
      </svg>
      <path d="M622 47L1186 281" stroke="#f00" stroke-width="2"/>
      <path d="M605 38L628 40L621 53Z" fill="#f00"/>
    </svg>
  </section>
</main>

<footer class="status">
  <label class="locate"><svg class="i24"><use href="#search"/></svg><input type="text" placeholder="Type to locate (Ctrl+K)"></label>
  <output>В слое Single parts выделено 0 объектов.</output>
  <label for="coord">Coordinate</label><input id="coord" class="field coord" type="text" value="50.794402,25.612249">
  <svg class="i16 mouse"><use href="#mouse"/></svg>
  <label for="scale">Масштаб</label>
  <span class="combo"><select id="scale"><option>1:1422</option></select><svg class="arrow"><use href="#chev"/></svg></span>
  <svg class="i16 lock"><use href="#lock"/></svg>
  <label for="mag">Magnifier</label>
  <span class="spin"><input id="mag" class="field" type="text" value="100%"><svg viewBox="0 0 10 18"><path d="M.5 6L5 1.500 9.500 6M.5 12L5 16.500 9.500 12" fill="none" stroke="#4d5054" stroke-width="1.300"/></svg></span>
  <label for="rot">Вращение</label>
  <span class="spin rotation"><input id="rot" class="field" type="text" value="0,0 °"><svg viewBox="0 0 10 18"><path d="M.5 6L5 1.500 9.500 6M.5 12L5 16.500 9.500 12" fill="none" stroke="#4d5054" stroke-width="1.300"/></svg></span>
  <label class="render"><input type="checkbox" checked>Отрисовка</label>
  <button class="crs"><svg class="i16"><use href="#crs"/></svg>EPSG:4326</button>
  <button class="log" aria-label="Сообщения"><svg><use href="#bubble"/></svg></button>
</footer>
</body>
</html>
```
FILE: styles.css
```css
* { box-sizing: border-box; }
body {
  margin: 0;
  height: 100vh;
  display: flex;
  flex-direction: column;
  background: #eff0f1;
  color: #232629;
  font: 17px/24px "Noto Sans", "Open Sans", sans-serif;
  overflow: hidden;
}
h1, h2, p, ul { margin: 0; padding: 0; font-size: 17px; font-weight: 400; }
ul { list-style: none; }
button { font: inherit; color: inherit; background: none; border: 0; padding: 0; }
svg { display: block; flex: none; }
i { display: block; flex: none; }
.sprite { position: absolute; width: 0; height: 0; }
.i24 { width: 24px; height: 24px; }
.i16 { width: 16px; height: 16px; }
.i14 { width: 14px; height: 14px; }
.arrow { width: 10px; height: 10px; }
.abc { font: bold 8px "DejaVu Sans", sans-serif; }
.one { font-size: 7px; }
.tt { font: bold 15px "Liberation Serif", serif; }
.qq { font: 15px "Liberation Serif", serif; }
.ee { font: bold 14px "DejaVu Sans", sans-serif; }
.db { font: 7px "Noto Sans", sans-serif; }

.titlebar {
  flex: none;
  height: 37px;
  display: flex;
  align-items: center;
  background: #475057;
  color: #fcfcfc;
}
.tb-side { flex: 1; display: flex; align-items: center; gap: 11px; padding: 0 9px 0 6px; }
.tb-side.end { justify-content: flex-end; gap: 14px; }

.menubar { flex: none; height: 38px; display: flex; align-items: center; gap: 1px; padding-left: 2px; }
.menubar button { padding: 0 10px; height: 36px; white-space: nowrap; }

.toolbar { flex: none; height: 36px; margin-bottom: 4px; padding-left: 5px; display: flex; align-items: center; gap: 2px; }
.toolbar + .toolbar { margin-bottom: 2px; }
.handle { width: 4px; height: 36px; border: solid #bcbec0; border-width: 0 1px; margin: 0 2px 0 6px; }
.handle:first-child { margin-left: 0; }
.tool { width: 34px; height: 34px; padding: 5px; display: flex; align-items: center; flex: none; border-radius: 3px; color: #4d5054; }
.tool svg { width: 24px; height: 24px; }
.tool.menu { width: 54px; gap: 10px; }
.tool .arrow { width: 10px; height: 10px; }
.tool.active { background: #c5c6c8; color: #fff; }

.work { flex: 1; min-height: 0; display: flex; gap: 2px; }
.dock { width: 453px; flex: none; display: flex; flex-direction: column; gap: 4px; padding: 1px 0 0 1px; }
.panel { min-height: 0; display: flex; flex-direction: column; border: 1px solid #bcbebf; border-radius: 3px; background: #f3f4f3; padding: 0 1px 1px; }
.browser { flex: 460 1 0; }
.layers { flex: 374 1 0; }
.phead { flex: none; height: 28px; display: flex; align-items: center; padding: 0 5px 0 3px; gap: 7px; color: #232629; }
.phead button { color: #7f8284; width: 16px; height: 16px; margin-bottom: 4px; }
.phead h2 { flex: 1; }
.phead svg { width: 16px; height: 16px; padding: 2px; }
.ptools { flex: none; height: 33px; display: flex; align-items: center; gap: 12px; padding: 0 7px; }
.ptools svg { width: 16px; height: 16px; }
.ptools .wide { display: flex; align-items: center; gap: 11px; }
.ptools .arrow { width: 10px; height: 10px; }
.tree { position: relative; flex: 1; min-height: 0; overflow: hidden; border: 1px solid #bcbebf; border-radius: 3px; background: #fcfcfc; padding-top: 1px; }
.tree li {
  height: 32px;
  display: flex;
  align-items: center;
  gap: 6px;
  padding: 0 0 0 28px;
  white-space: nowrap;
  background: linear-gradient(#c0c2c3, #c0c2c3) 12px 0 / 1px 100% no-repeat, linear-gradient(#c0c2c3, #c0c2c3) 12px 15px / 13px 1px no-repeat;
}
.tree svg { width: 16px; height: 16px; }
.tree .more {
  background: linear-gradient(#c0c2c3 9px, transparent 9px 23px, #c0c2c3 23px) 12px 0 / 1px 100% no-repeat, linear-gradient(#c0c2c3, #c0c2c3) 18px 15px / 7px 1px no-repeat;
}
.more::before { content: ""; width: 7px; height: 7px; border: solid #4d5054; border-width: 1px 1px 0 0; transform: rotate(45deg); margin: 0 10px 0 -23px; }
.scroll { position: absolute; right: 9px; top: 7px; width: 3px; height: 68%; border-radius: 2px; background: #afb1b3; }

input[type="checkbox"] { appearance: none; flex: none; width: 16px; height: 16px; margin: 0; border: 1px solid #6e7173; border-radius: 3px; background: #fcfcfc; }
input[type="checkbox"]:checked { border-color: #3daee9; background: #3daee9; box-shadow: inset 0 0 0 2px #e3f2fb; }

.layers li { padding-left: 25px; color: #bfc0c0; }
.layers label { flex: 1; height: 32px; display: flex; align-items: center; gap: 6px; padding-left: 5px; }
.layers label input { margin-right: 2px; }
.layers .last { background-size: 1px 16px, 13px 1px; }
.layers .current label { background: #c2e0f5; color: #232629; }
.layers span, .message b { font-weight: 400; text-shadow: 1px 0 currentColor; }
.current span { text-decoration: underline; text-underline-offset: 3px; }
.swatch { width: 16px; height: 16px; border: 1px solid rgba(30, 30, 30, .6); }
.orange { background: #e77148; }
.lime { background: #becf50; }
.violet { background: #987db7; }
.red { background: #b7484b; }

.map { position: relative; flex: 1; min-width: 0; background: #fff; border: 1px solid #3daee9; border-top: 0; }
.message { height: 52px; margin: 0 -1px; display: flex; align-items: center; background: #ffc800; border: 1px solid #d8ab0c; padding: 0 9px; color: #000; }
.message p { flex: 1; margin: 0 0 2px 10px; }
.details { height: 46px; padding: 10px 10px 0; border: 1px solid #efc01f; border-radius: 3px; }
.details a { color: #000; text-underline-offset: 3px; }
.message button { width: 38px; height: 32px; margin-left: 14px; border: 1px solid #b88f00; border-radius: 3px; display: flex; align-items: center; justify-content: center; }
.message button svg { width: 18px; height: 18px; }
.features { position: absolute; left: 0; top: 0; overflow: visible; pointer-events: none; }
.ghost { position: absolute; z-index: 1; right: 117px; bottom: -44px; width: 163px; height: 117px; overflow: visible; color: rgba(0, 0, 0, .02); line-height: 30px; pointer-events: none; }
.ghost b, .ghost span { display: block; font-weight: 400; padding-left: 5px; }
.ghost b { background: #f9fdfe; color: #fefefe; }
.ghost .exit { margin-top: 3px; line-height: 24px; }

.status { flex: none; height: 44px; display: flex; align-items: center; padding: 4px 6px 0 5px; border-bottom: 2px solid #a0a1a2; white-space: nowrap; }
.status input[type="text"], select { font: inherit; color: #232629; outline: 0; }
.locate, .field, .combo select { height: 36px; border: 1px solid #bcbebf; border-radius: 3px; background: #fcfcfc; }
.locate { width: 276px; flex: none; display: flex; align-items: center; gap: 15px; padding-left: 13px; }
.locate input { border: 0; background: none; padding: 0; min-width: 0; flex: 1; }
.locate input::placeholder { color: #9c9e9f; opacity: 1; }
output { flex: 1; padding-left: 9px; color: #000; }
.coord { width: 177px; margin-left: 5px; padding: 0 6px 0 3px; direction: rtl; }
.mouse { margin: 0 16px 0 6px; }
.combo, .spin { position: relative; margin-left: 5px; }
.combo select { appearance: none; width: 115px; padding: 0 6px; display: block; }
.combo .arrow { position: absolute; right: 7px; top: 13px; color: #4d5054; }
.lock { margin: 0 14px 0 8px; }
.spin .field { display: block; width: 111px; padding: 0 6px; }
.spin svg { position: absolute; right: 6px; top: 9px; width: 10px; height: 18px; }
.spin + label { margin-left: 10px; }
.rotation { margin-left: 12px; }
.rotation .field { width: 107px; }
.render { display: flex; align-items: center; gap: 6px; }
.spin + .render { margin-left: 9px; }
.crs { display: flex; align-items: center; gap: 4px; margin-left: 22px; }
.log { margin-left: 22px; }
.log svg { width: 18px; height: 16px; }
```
